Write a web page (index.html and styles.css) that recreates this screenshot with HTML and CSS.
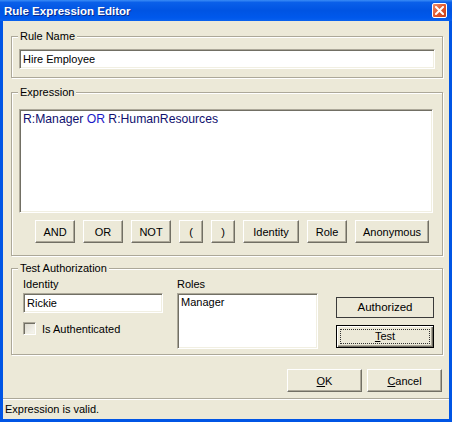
FILE: index.html
```html
<!DOCTYPE html>
<html lang="en">
<head>
    <meta charset="UTF-8">
    <title>Rule Expression Editor</title>
    <link rel="stylesheet" href="styles.css">
</head>
<body>
    <div class="window">
        <!-- Title bar -->
        <div class="titlebar">
            <span class="title">Rule Expression Editor</span>
            <span class="close-btn">
                <svg width="9" height="9" viewBox="0 0 9 9">
                    <path d="M1 1 L8 8 M8 1 L1 8" stroke="#fff" stroke-width="2" stroke-linecap="square"/>
                </svg>
            </span>
        </div>

        <div class="client">
            <div class="content">
                <div class="group group-name">
                    <div class="group-title">Rule Name</div>
                    <div class="textbox name-box">Hire Employee</div>
                </div>

                <div class="group group-expr">
                    <div class="group-title">Expression</div>
                    <div class="textbox expr-box">
                        <span class="role">R:Manager</span> <span class="op">OR</span> <span class="role">R:HumanResources</span>
                    </div>
                    <div class="op-buttons">
                        <button class="btn w40">AND</button>
                        <button class="btn w40">OR</button>
                        <button class="btn w40">NOT</button>
                        <button class="btn w24">(</button>
                        <button class="btn w24">)</button>
                        <button class="btn w56">Identity</button>
                        <button class="btn w40">Role</button>
                        <button class="btn w74">Anonymous</button>
                    </div>
                </div>

                <div class="group group-test">
                    <div class="group-title">Test Authorization</div>
                    <div class="test-row">
                        <div class="col-identity">
                            <div class="field-label">Identity</div>
                            <div class="textbox identity-box">Rickie</div>
                            <div class="check-row">
                                <span class="checkbox"></span>
                                <span>Is Authenticated</span>
                            </div>
                        </div>
                        <div class="col-roles">
                            <div class="field-label">Roles</div>
                            <div class="textbox roles-box">Manager</div>
                        </div>
                        <div class="col-actions">
                            <div class="result-box">Authorized</div>
                            <button class="btn btn-default"><span class="focus"><u>T</u>est</span></button>
                        </div>
                    </div>
                </div>

                <div class="dialog-buttons">
                    <button class="btn w75"><u>O</u>K</button>
                    <button class="btn w75"><u>C</u>ancel</button>
                </div>
            </div>

            <div class="statusbar">Expression is valid.</div>
        </div>
    </div>
</body>
</html>
```

FILE: styles.css
```css
body {
    margin: 0;
    font-family: "Liberation Sans", Arial, sans-serif;
    font-size: 11px;
    color: #000;
}

.window {
    width: 452px;
    height: 422px;
    box-sizing: border-box;
    padding: 0 3px 3px;
    background: #0055e5;
    display: flex;
    flex-direction: column;
}

/* Title bar */
.titlebar {
    height: 21px;
    margin: 0 -3px;
    padding: 0 5px 0 4px;
    display: flex;
    align-items: center;
    justify-content: space-between;
    background: linear-gradient(to bottom, #3a8cf6 0%, #0a5fe9 12%, #0054e3 50%, #0058ec 85%, #0a62ee 100%);
    color: #fff;
    font-weight: bold;
    font-size: 11.5px;
}

.title {
    text-shadow: 1px 1px 0 #0a2a8a;
}

.close-btn {
    width: 13px;
    height: 13px;
    border: 1px solid #fff;
    border-radius: 2px;
    background: linear-gradient(135deg, #f0906c 0%, #e0582f 50%, #c8401a 100%);
    display: flex;
    align-items: center;
    justify-content: center;
}

/* Client area */
.client {
    flex: 1;
    background: #ece9d8;
    display: flex;
    flex-direction: column;
}

.content {
    flex: 1;
    padding: 0 6px 0 8px;
}

.group {
    border: 1px solid #aca899;
    box-shadow: inset 1px 1px 0 #fff, 1px 1px 0 #fff;
}

.group-title {
    width: fit-content;
    margin: -8px 0 0 -1px;
    padding: 0 2px;
    line-height: 14px;
    background: #ece9d8;
}

.group-name {
    margin-top: 15px;
    padding: 0 7px 8px;
}

.group-expr {
    margin-top: 14px;
    padding: 0 7px 12px;
}

.group-test {
    margin-top: 12px;
    padding: 0 7px 5px 11px;
}

.group-test .group-title {
    margin-left: -5px;
}

.textbox {
    box-sizing: border-box;
    background: #fff;
    border-top: 1px solid #aca899;
    border-left: 1px solid #aca899;
    border-right: 1px solid #fff;
    border-bottom: 1px solid #fff;
    box-shadow: inset 1px 1px 0 #716f64, inset -1px -1px 0 #f1efe2;
    padding: 0 3px;
}

.name-box {
    margin-top: 6px;
    height: 20px;
    line-height: 18px;
}

.expr-box {
    margin-top: 10px;
    margin-right: 2px;
    height: 104px;
    padding-top: 2px;
    font-size: 12.2px;
    line-height: 14px;
}

.role {
    color: #10106e;
}

.op {
    color: #1a1ac8;
}

/* Buttons */
.btn {
    height: 23px;
    padding: 0;
    font-family: inherit;
    font-size: 11px;
    color: #000;
    background: #ece9d8;
    border-top: 1px solid #fff;
    border-left: 1px solid #fff;
    border-right: 1px solid #716f64;
    border-bottom: 1px solid #716f64;
    box-shadow: inset -1px -1px 0 #aca899;
}

.w24 { width: 24px; }
.w40 { width: 40px; }
.w56 { width: 56px; }
.w74 { width: 74px; }
.w75 { width: 75px; }

.op-buttons {
    margin-top: 7px;
    margin-left: 16px;
    display: flex;
    gap: 8px;
}

/* Test authorization */
.test-row {
    display: flex;
    align-items: flex-start;
}

.field-label {
    margin-top: 3px;
    line-height: 13px;
}

.col-identity {
    width: 140px;
}

.identity-box {
    margin-top: 2px;
    height: 20px;
    line-height: 18px;
}

.check-row {
    margin-top: 9px;
    display: flex;
    align-items: center;
    gap: 6px;
}

.checkbox {
    width: 13px;
    height: 13px;
    box-sizing: border-box;
    border-top: 1px solid #aca899;
    border-left: 1px solid #aca899;
    border-right: 1px solid #fff;
    border-bottom: 1px solid #fff;
    box-shadow: inset 1px 1px 0 #716f64, inset -1px -1px 0 #f1efe2;
    background: linear-gradient(135deg, #dcd9cc, #f8f7f2);
}

.col-roles {
    margin-left: 14px;
    width: 141px;
}

.roles-box {
    margin-top: 2px;
    height: 56px;
    padding-top: 2px;
    line-height: 13px;
}

.col-actions {
    margin-left: 18px;
    margin-top: 22px;
    width: 98px;
}

.result-box {
    box-sizing: border-box;
    height: 21px;
    line-height: 19px;
    text-align: center;
    border: 1px solid #3a3a3a;
    font-size: 11.5px;
}

.btn-default {
    margin-top: 7px;
    width: 98px;
    border: 1px solid #000;
    box-shadow: inset 1px 1px 0 #fff, inset -1px -1px 0 #716f64, inset -2px -2px 0 #aca899;
    padding: 3px;
}

.focus {
    display: block;
    height: 100%;
    box-sizing: border-box;
    border: 1px dotted #333;
    line-height: 13px;
}

/* Dialog buttons */
.dialog-buttons {
    margin-top: 14px;
    display: flex;
    justify-content: flex-end;
    gap: 5px;
    padding-right: 1px;
}

/* Status bar */
.statusbar {
    height: 21px;
    box-sizing: border-box;
    border-top: 1px solid #aca899;
    box-shadow: inset 0 1px 0 #fff;
    padding-left: 2px;
    line-height: 20px;
}
```
